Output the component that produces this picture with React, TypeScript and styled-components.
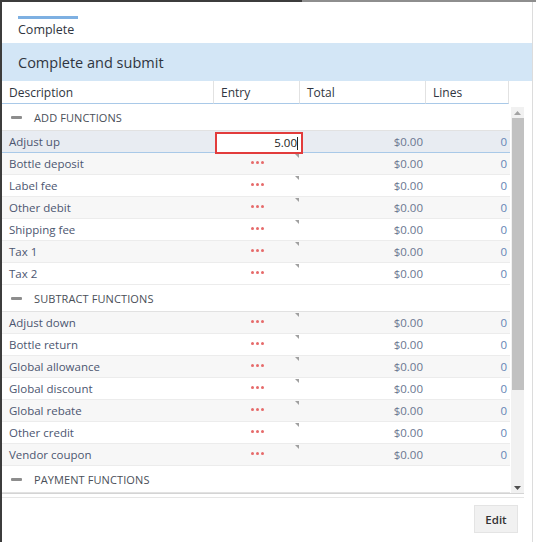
import React from "react";
import styled, { createGlobalStyle } from "styled-components";

const GlobalStyle = createGlobalStyle`
  html, body { margin: 0; padding: 0; background: #fff; }
  body { font-family: "Open Sans", "Liberation Sans", sans-serif; color: #333; }
  * { box-sizing: border-box; }
`;

const Frame = styled.div`
  width: 536px;
  height: 542px;
  display: flex;
  flex-direction: column;
  overflow: hidden;
  background: #fff;
`;

const TopEdge = styled.div`
  height: 2px;
  flex: none;
  background: linear-gradient(to right, #3c3c3c 0, #3c3c3c 302px, #8e8e8e 302px, #8e8e8e 100%);
`;

const Body = styled.div`
  flex: 1;
  display: flex;
  border-left: 2px solid #3c3c3c;
`;

const Main = styled.div`
  width: 531px;
  display: flex;
  flex-direction: column;
  border-right: 1px solid #dcdcdc;
`;

const TabBar = styled.div`
  height: 41px;
  display: flex;
  padding-left: 16px;
`;

const Tab = styled.div<{ $active?: boolean }>`
  margin-top: 14px;
  padding: 3px 4px 0 0;
  border-top: 3px solid ${(p) => (p.$active ? "#7eb0e2" : "transparent")};
  font-size: 12.5px;
  color: #2f3540;
  line-height: 16px;
  align-self: flex-start;
`;

const Band = styled.div`
  height: 38px;
  background: #d3e6f6;
  display: flex;
  align-items: center;
  padding-left: 16px;
  font-size: 14.5px;
  color: #2f3540;
`;

const GridWrap = styled.div`
  width: 522px;
  display: flex;
  flex-direction: column;
`;

const HeaderRow = styled.div`
  display: grid;
  grid-template-columns: 212px 86px 126px 83px 15px;
  height: 23px;
`;

const HeaderCell = styled.div<{ $last?: boolean }>`
  display: flex;
  align-items: center;
  padding-left: ${(p) => (p.$last ? 0 : 7)}px;
  font-size: 12px;
  color: #2f3540;
  border-right: ${(p) => (p.$last ? "none" : "1px solid #e2e2e2")};
  border-bottom: ${(p) => (p.$last ? "1px solid transparent" : "1px solid #a9c9e8")};
`;

const BodyArea = styled.div`
  height: 390px;
  display: flex;
  border-bottom: 1px solid #d4d4d4;
`;

const Viewport = styled.div`
  width: 508px;
  overflow: hidden;
`;

const GroupRow = styled.div`
  height: 27px;
  display: flex;
  align-items: center;
  padding-left: 9px;
  gap: 12px;
  border-bottom: 1px solid #e2e2e2;
  font-size: 11px;
  letter-spacing: 0.1px;
  color: #4a4f58;
`;

const Dash = styled.span`
  width: 11px;
  height: 3px;
  background: #8d8d8d;
  border-radius: 1px;
`;

const Row = styled.div<{ $alt?: boolean; $selected?: boolean }>`
  display: grid;
  grid-template-columns: 212px 86px 126px 84px;
  height: 22px;
  background: ${(p) => (p.$selected ? "#e8ecf2" : p.$alt ? "#f7f7f7" : "#fff")};
  border-bottom: 1px solid ${(p) => (p.$selected ? "#a9c9e8" : "#ececec")};
  font-size: 11.5px;
  line-height: 22px;
`;

const DescCell = styled.div`
  display: flex;
  align-items: center;
  padding-left: 7px;
  color: #4c5670;
  white-space: nowrap;
`;

const EntryCell = styled.div`
  position: relative;
  display: flex;
  align-items: center;
  justify-content: center;
`;

const Dots = styled.div`
  display: flex;
  gap: 2px;
  margin-top: -3px;
  margin-left: 1px;
`;

const Dot = styled.span`
  width: 3px;
  height: 3px;
  border-radius: 50%;
  background: #e66a6a;
`;

const Corner = styled.span`
  position: absolute;
  top: 1px;
  right: 1px;
  width: 0;
  height: 0;
  border-top: 4px solid #a0a0a0;
  border-left: 4px solid transparent;
`;

const EditBox = styled.div`
  position: absolute;
  left: 1px;
  top: 1px;
  width: 88px;
  height: 22px;
  border: 2px solid #e23c3c;
  background: #fff;
  display: flex;
  align-items: center;
  justify-content: flex-end;
  padding-right: 3px;
  font-size: 11.5px;
  color: #222;
  z-index: 1;
`;

const Caret = styled.span`
  width: 1px;
  height: 13px;
  background: #222;
`;

const TotalCell = styled.div`
  display: flex;
  align-items: center;
  justify-content: flex-end;
  padding-right: 3px;
  color: #6a7690;
`;

const LinesCell = styled.div`
  display: flex;
  align-items: center;
  justify-content: flex-end;
  padding-right: 3px;
  color: #6584b5;
`;

const Scrollbar = styled.div`
  width: 13px;
  margin-left: 1px;
  margin-top: 3px;
  background: #f1f1f1;
  display: flex;
  flex-direction: column;
  align-items: center;
`;

const Arrow = styled.div`
  height: 11px;
  width: 13px;
  display: flex;
  align-items: center;
  justify-content: center;
`;

const Thumb = styled.div`
  width: 12px;
  height: 272px;
  background: #c1c1c1;
`;

const TrackFill = styled.div`
  flex: 1;
`;

const Divider = styled.div`
  margin-top: 3px;
  height: 1px;
  background: #e6e6e6;
`;

const Footer = styled.div`
  display: flex;
  justify-content: flex-end;
  padding: 7px 14px 0 0;
`;

const Button = styled.button`
  width: 44px;
  height: 28px;
  border: 1px solid #e4e4e4;
  background: #f1f1f1;
  font-family: "Open Sans", "Liberation Sans", sans-serif;
  font-size: 11.5px;
  font-weight: 600;
  color: #333;
  padding: 0;
`;

const groups: { title: string; items: string[] }[] = [
  {
    title: "ADD FUNCTIONS",
    items: ["Adjust up", "Bottle deposit", "Label fee", "Other debit", "Shipping fee", "Tax 1", "Tax 2"],
  },
  {
    title: "SUBTRACT FUNCTIONS",
    items: [
      "Adjust down",
      "Bottle return",
      "Global allowance",
      "Global discount",
      "Global rebate",
      "Other credit",
      "Vendor coupon",
    ],
  },
  { title: "PAYMENT FUNCTIONS", items: [] },
];

export default function App() {
  let idx = 0;
  return (
    <>
      <GlobalStyle />
      <Frame>
        <TopEdge />
        <Body>
          <Main>
            <TabBar>
              <Tab $active>Complete</Tab>
            </TabBar>
            <Band>Complete and submit</Band>
            <GridWrap>
              <HeaderRow>
                <HeaderCell>Description</HeaderCell>
                <HeaderCell>Entry</HeaderCell>
                <HeaderCell>Total</HeaderCell>
                <HeaderCell>Lines</HeaderCell>
                <HeaderCell $last />
              </HeaderRow>
              <BodyArea>
                <Viewport>
                  {groups.map((g) => (
                    <React.Fragment key={g.title}>
                      <GroupRow>
                        <Dash />
                        {g.title}
                      </GroupRow>
                      {g.items.map((name) => {
                        const i = idx++;
                        const selected = i === 0;
                        return (
                          <Row key={name} $alt={i % 2 === 1} $selected={selected}>
                            <DescCell>{name}</DescCell>
                            <EntryCell>
                              {selected ? (
                                <EditBox>
                                  5.00
                                  <Caret />
                                </EditBox>
                              ) : (
                                <>
                                  <Dots>
                                    <Dot />
                                    <Dot />
                                    <Dot />
                                  </Dots>
                                  <Corner />
                                </>
                              )}
                            </EntryCell>
                            <TotalCell>$0.00</TotalCell>
                            <LinesCell>0</LinesCell>
                          </Row>
                        );
                      })}
                    </React.Fragment>
                  ))}
                </Viewport>
                <Scrollbar>
                  <Arrow>
                    <svg width="7" height="4" viewBox="0 0 7 4">
                      <path d="M0 4 L3.5 0 L7 4 Z" fill="#a3a3a3" />
                    </svg>
                  </Arrow>
                  <Thumb />
                  <TrackFill />
                  <Arrow>
                    <svg width="7" height="4" viewBox="0 0 7 4">
                      <path d="M0 0 L3.5 4 L7 0 Z" fill="#505050" />
                    </svg>
                  </Arrow>
                </Scrollbar>
              </BodyArea>
              <Divider />
            </GridWrap>
            <Footer>
              <Button>Edit</Button>
            </Footer>
          </Main>
        </Body>
      </Frame>
    </>
  );
}
